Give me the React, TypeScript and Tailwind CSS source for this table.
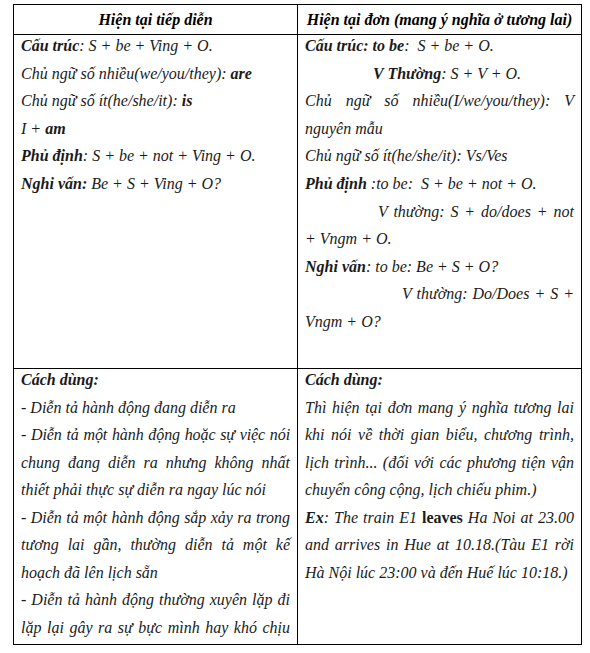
import React from 'react';

const Line = ({ children, className = '' }: { children: React.ReactNode; className?: string }) => (
  <div className={`whitespace-nowrap ${className}`}>{children}</div>
);

// dòng căn đều hai bên (justify cả dòng cuối)
const J = ({ children, className = '' }: { children: React.ReactNode; className?: string }) => (
  <div className={`text-justify [text-align-last:justify] ${className}`}>{children}</div>
);

const B = ({ children }: { children: React.ReactNode }) => <b className="font-bold">{children}</b>;

const App = () => {
  return (
    <div className="w-[590px] h-[653px] bg-white pt-[4px] pl-[13px] text-[16px] italic text-[#1a1a1a] font-['Liberation_Serif','Times_New_Roman',serif]">
      <div className="grid grid-cols-[284px_284px] border-l border-t border-black w-[569px]">
        {/* tiêu đề */}
        <div className="h-[30px] border-r border-b border-black flex items-center justify-center font-bold text-black">
          Hiện tại tiếp diễn
        </div>
        <div className="h-[30px] border-r border-b border-black flex items-center justify-center font-bold text-black">
          Hiện tại đơn (mang ý nghĩa ở tương lai)
        </div>

        {/* cấu trúc */}
        <div className="h-[334px] border-r border-b border-black px-[7px] leading-[27.6px]">
          <div className="-mt-[3px]">
            <Line><B>Cấu trúc</B>: S + be + Ving + O.</Line>
            <Line>Chủ ngữ số nhiều(we/you/they): <B>are</B></Line>
            <Line>Chủ ngữ số ít(he/she/it): <B>is</B></Line>
            <Line>I + <B>am</B></Line>
            <Line><B>Phủ định</B>: S + be + not + Ving + O.</Line>
            <Line><B>Nghi vấn:</B> Be + S + Ving + O?</Line>
          </div>
        </div>
        <div className="h-[334px] border-r border-b border-black px-[7px] leading-[27.6px]">
          <div className="-mt-[3px]">
            <Line><B>Cấu trúc: to be</B>:{'\u00a0\u00a0'}S + be + O.</Line>
            <Line className="pl-[68px]"><B>V Thường</B>: S + V + O.</Line>
            <J>Chủ ngữ số nhiều(I/we/you/they): V</J>
            <Line>nguyên mẫu</Line>
            <Line>Chủ ngữ số ít(he/she/it): Vs/Ves</Line>
            <Line><B>Phủ định</B> :to be:{'\u00a0\u00a0'}S + be + not + O.</Line>
            <J className="pl-[73px]">V thường: S + do/does + not</J>
            <Line>+ Vngm + O.</Line>
            <Line><B>Nghi vấn</B>: to be: Be + S + O?</Line>
            <J className="pl-[97px]">V thường: Do/Does + S +</J>
            <Line>Vngm + O?</Line>
          </div>
        </div>

        {/* cách dùng */}
        <div className="h-[276px] border-r border-b border-black px-[7px] leading-[27.5px]">
          <div className="-mt-[3px]">
            <Line><B>Cách dùng:</B></Line>
            <Line>- Diễn tả hành động đang diễn ra</Line>
            <J className="tracking-[-0.1px]">- Diễn tả một hành động hoặc sự việc nói</J>
            <J>chung đang diễn ra nhưng không nhất</J>
            <Line>thiết phải thực sự diễn ra ngay lúc nói</Line>
            <J>- Diễn tả một hành động sắp xảy ra trong</J>
            <J>tương lai gần, thường diễn tả một kế</J>
            <Line>hoạch đã lên lịch sẵn</Line>
            <J>- Diễn tả hành động thường xuyên lặp đi</J>
            <J>lặp lại gây ra sự bực mình hay khó chịu</J>
          </div>
        </div>
        <div className="h-[276px] border-r border-b border-black px-[7px] leading-[27.5px]">
          <div className="-mt-[3px]">
            <Line><B>Cách dùng:</B></Line>
            <J>Thì hiện tại đơn mang ý nghĩa tương lai</J>
            <J>khi nói về thời gian biểu, chương trình,</J>
            <J>lịch trình... (đối với các phương tiện vận</J>
            <Line>chuyển công cộng, lịch chiếu phim.)</Line>
            <J><B>Ex</B>: The train E1 <b className="font-bold not-italic">leaves</b> Ha Noi at 23.00</J>
            <J>and arrives in Hue at 10.18.(Tàu E1 rời</J>
            <Line>Hà Nội lúc 23:00 và đến Huế lúc 10:18.)</Line>
          </div>
        </div>
      </div>
    </div>
  );
};

export default App;
